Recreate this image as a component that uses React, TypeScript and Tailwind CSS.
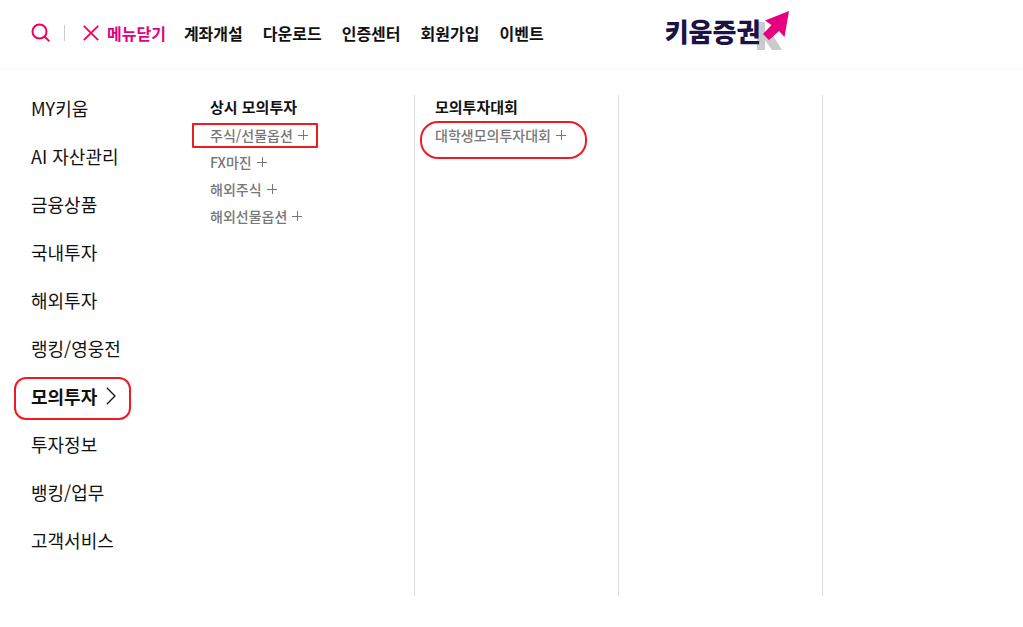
interface MenuColumn {
  title: string;
  links: string[];
}

const topLinks = ['계좌개설', '다운로드', '인증센터', '회원가입', '이벤트'];

const categories = [
  'MY키움',
  'AI 자산관리',
  '금융상품',
  '국내투자',
  '해외투자',
  '랭킹/영웅전',
  '모의투자',
  '투자정보',
  '뱅킹/업무',
  '고객서비스',
];

const activeCategory = '모의투자';

const columns: MenuColumn[] = [
  { title: '상시 모의투자', links: ['주식/선물옵션', 'FX마진', '해외주식', '해외선물옵션'] },
  { title: '모의투자대회', links: ['대학생모의투자대회'] },
];

// outlines drawn around the highlighted links
const marks: Record<string, string> = {
  '주식/선물옵션': 'top-0 -right-[10px] -bottom-px -left-[18px] rounded-[1px]',
  대학생모의투자대회: '-top-[2px] -right-[21px] -bottom-3 -left-[15px] rounded-[18px]',
};

function SearchIcon() {
  return (
    <svg width="20" height="20" viewBox="0 0 20 20" fill="none" stroke="#f5005a" strokeWidth="2" aria-hidden="true">
      <circle cx="8.5" cy="8.5" r="7" />
      <path d="M13 13 18.4 18.4" />
    </svg>
  );
}

function CloseIcon() {
  return (
    <svg width="16" height="16" viewBox="0 0 16 16" fill="none" stroke="#f5005a" strokeWidth="1.8" aria-hidden="true">
      <path d="M0.8 0.8 15.2 15.2M15.2 0.8 0.8 15.2" />
    </svg>
  );
}

function PlusIcon() {
  return (
    <svg width="10" height="10" viewBox="0 0 10 10" stroke="#777" shapeRendering="crispEdges" aria-hidden="true">
      <path d="M0 5.5H10M5.5 0V10" />
    </svg>
  );
}

function ChevronIcon() {
  return (
    <svg width="10" height="18" viewBox="0 0 10 18" fill="none" stroke="#111" strokeWidth="1.3" aria-hidden="true">
      <path d="M0.8 0.8 9 9 0.8 17.2" />
    </svg>
  );
}

function Logo() {
  return (
    <a href="#" aria-label="키움증권" className="flex items-start">
      <span className="z-10 text-[26px] leading-[40px] font-black text-[#1b1347]">키움증권</span>
      <svg width="34" height="40" viewBox="0 0 34 40" className="-ml-1" aria-hidden="true">
        <path d="M1 11h8v28H1zM9 25 16 23 26 39H16L9 29z" fill="#cbcbcb" />
        <path d="M33 0 28.5 26 23 20 13 29 7 23 15.5 14 9 9.5z" fill="#e4007f" />
      </svg>
    </a>
  );
}

export default function App() {
  return (
    <div
      lang="ko"
      className="min-h-screen bg-white font-['Noto_Sans_CJK_KR',sans-serif] text-[#111]"
    >
      <header className="flex h-[69px] items-center border-b border-[#f8f8f8] pb-[3px] pl-[31px]">
        <button type="button" aria-label="검색">
          <SearchIcon />
        </button>
        <span className="ml-[13px] h-4 w-px bg-[#ccc]" />
        <button
          type="button"
          className="ml-[18px] flex items-center gap-2 text-base font-bold whitespace-nowrap text-[#e4007f]"
        >
          <CloseIcon />
          메뉴닫기
        </button>
        <nav className="ml-[18px] flex gap-5 text-base font-bold whitespace-nowrap">
          {topLinks.map((label) => (
            <a key={label} href="#">
              {label}
            </a>
          ))}
        </nav>
        <div className="ml-[121px] shrink-0 pb-1">
          <Logo />
        </div>
      </header>

      <main className="flex">
        <nav className="w-[190px] shrink-0 pt-[15px] pb-8 pl-[31px]">
          <ul className="text-lg">
            {categories.map((label) => (
              <li key={label} className="flex h-12 items-center">
                {label === activeCategory ? (
                  <a href="#" aria-current="page" className="relative flex items-center gap-[9px] font-bold">
                    {label}
                    <ChevronIcon />
                    <span className="pointer-events-none absolute -top-[5px] -right-[15px] -bottom-[10px] -left-[17px] rounded-xl border-2 border-[#ed1c24]" />
                  </a>
                ) : (
                  <a href="#">{label}</a>
                )}
              </li>
            ))}
          </ul>
        </nav>

        <div className="mt-[26px] grid flex-1 grid-cols-[225px_204px_204px_1fr]">
          {columns.map((col) => (
            <section key={col.title} className="border-r border-[#ddd] pl-5">
              <h2 className="mb-0.5 text-[15px] leading-6 font-bold">{col.title}</h2>
              <ul className="text-sm font-medium text-[#777]">
                {col.links.map((label) => (
                  <li key={label} className="flex h-[27px] items-center">
                    <a href="#" className="relative flex h-6 items-center gap-[5px]">
                      {label}
                      <PlusIcon />
                      {marks[label] && (
                        <span className={`pointer-events-none absolute border-2 border-[#ed1c24] ${marks[label]}`} />
                      )}
                    </a>
                  </li>
                ))}
              </ul>
            </section>
          ))}
          <div className="border-r border-[#ddd]" />
        </div>
      </main>
    </div>
  );
}
